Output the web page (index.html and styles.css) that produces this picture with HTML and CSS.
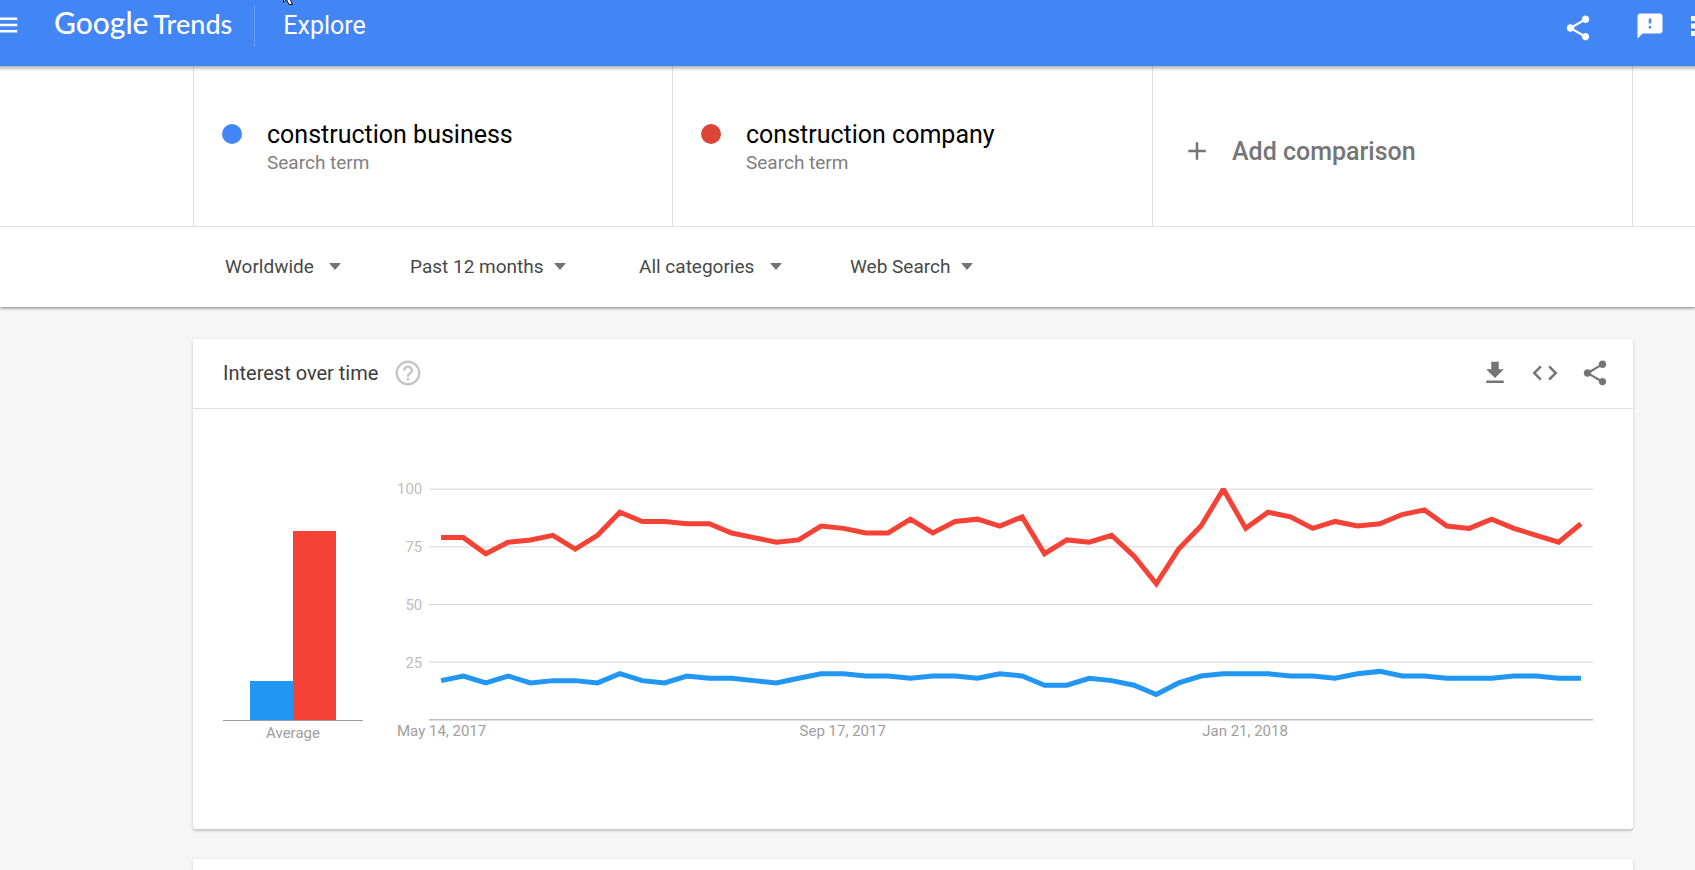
FILE: index.html
```html
<!DOCTYPE html>
<html lang="en">
<head>
  <meta charset="UTF-8">
  <title>Google Trends - Explore</title>
  <link rel="stylesheet" href="styles.css">
</head>
<body>
  <header class="topbar">
    <button class="icon-btn menu-btn" aria-label="Menu">
      <svg viewBox="0 0 24 24"><path d="M3 18h18v-2H3v2zm0-5h18v-2H3v2zm0-7v2h18V6H3z"/></svg>
    </button>
    <a class="logo" href="#"><span class="logo-google">Google</span><span class="logo-trends">Trends</span></a>
    <h1 class="page-name">Explore</h1>
    <div class="topbar-actions">
      <button class="icon-btn share-btn" aria-label="Share">
        <svg viewBox="0 0 24 24"><path d="M18 16.08c-.76 0-1.44.3-1.96.77L8.91 12.7c.05-.23.09-.46.09-.7s-.04-.47-.09-.7l7.05-4.11c.54.5 1.25.81 2.04.81 1.66 0 3-1.34 3-3s-1.34-3-3-3-3 1.34-3 3c0 .24.04.47.09.7L8.04 9.81C7.5 9.31 6.79 9 6 9c-1.66 0-3 1.34-3 3s1.34 3 3 3c.79 0 1.5-.31 2.04-.81l7.12 4.16c-.05.21-.08.43-.08.65 0 1.61 1.31 2.92 2.92 2.92s2.92-1.31 2.92-2.92-1.31-2.92-2.92-2.92z"/></svg>
      </button>
      <button class="icon-btn" aria-label="Send feedback">
        <svg viewBox="0 0 24 24"><path d="M20 2H4c-1.1 0-1.99.9-1.99 2L2 22l4-4h14c1.1 0 2-.9 2-2V4c0-1.1-.9-2-2-2zm-7 12h-2v-2h2v2zm0-4h-2V6h2v4z"/></svg>
      </button>
      <button class="icon-btn" aria-label="Google apps">
        <svg viewBox="0 0 24 24"><path d="M4 8h4V4H4v4zm6 12h4v-4h-4v4zm-6 0h4v-4H4v4zm0-6h4v-4H4v4zm6 0h4v-4h-4v4zm6-10v4h4V4h-4zm-6 4h4V4h-4v4zm6 6h4v-4h-4v4zm0 6h4v-4h-4v4z"/></svg>
      </button>
    </div>
    <svg class="pointer" viewBox="0 0 12 6"><path d="M.5-8V2.500L3.500-.5L6 4.500H9.500L6.500-2H11z" fill="#fff" stroke="#111"/></svg>
  </header>

  <section class="search">
    <div class="terms">
      <div class="term">
        <span class="dot dot-blue"></span>
        <div>
          <div class="term-name">construction business</div>
          <div class="term-type">Search term</div>
        </div>
      </div>
      <div class="term">
        <span class="dot dot-red"></span>
        <div>
          <div class="term-name">construction company</div>
          <div class="term-type">Search term</div>
        </div>
      </div>
      <button class="add-term">
        <svg viewBox="0 0 24 24"><path d="M19 13h-6v6h-2v-6H5v-2h6V5h2v6h6v2z"/></svg>
        Add comparison
      </button>
    </div>

    <div class="filters">
      <div class="filter filter-wide">
        <select aria-label="Region"><option>Worldwide</option></select>
        <svg viewBox="0 0 12 7"><path d="M0 0h12L6 7z"/></svg>
      </div>
      <div class="filter">
        <select aria-label="Time range"><option>Past 12 months</option></select>
        <svg viewBox="0 0 12 7"><path d="M0 0h12L6 7z"/></svg>
      </div>
      <div class="filter filter-wide">
        <select aria-label="Category"><option>All categories</option></select>
        <svg viewBox="0 0 12 7"><path d="M0 0h12L6 7z"/></svg>
      </div>
      <div class="filter">
        <select aria-label="Search type"><option>Web Search</option></select>
        <svg viewBox="0 0 12 7"><path d="M0 0h12L6 7z"/></svg>
      </div>
    </div>
  </section>

  <main class="content">
    <section class="card">
      <div class="card-header">
        <h2>Interest over time</h2>
        <button class="icon-btn help-btn" aria-label="Help">
          <svg viewBox="0 0 24 24"><path d="M11 18h2v-2h-2v2zm1-16C6.480 2 2 6.480 2 12s4.480 10 10 10 10-4.480 10-10S17.520 2 12 2zm0 18c-4.410 0-8-3.590-8-8s3.590-8 8-8 8 3.590 8 8-3.590 8-8 8zm0-14c-2.210 0-4 1.790-4 4h2c0-1.100.9-2 2-2s2 .9 2 2c0 2-3 1.750-3 5h2c0-2.250 3-2.500 3-5 0-2.210-1.790-4-4-4z"/></svg>
        </button>
        <div class="card-actions">
          <button class="icon-btn" aria-label="Download CSV">
            <svg viewBox="0 0 24 24"><path d="M19 9h-4V3H9v6H5l7 7 7-7zM5 18v2h14v-2H5z"/></svg>
          </button>
          <button class="icon-btn" aria-label="Embed">
            <svg viewBox="0 0 24 24"><path d="M9.400 16.600L4.800 12l4.600-4.600L8 6l-6 6 6 6 1.400-1.400zm5.200 0l4.600-4.600-4.600-4.600L16 6l6 6-6 6-1.400-1.400z"/></svg>
          </button>
          <button class="icon-btn" aria-label="Share chart">
            <svg viewBox="0 0 24 24"><path d="M18 16.080c-.76 0-1.440.3-1.960.77L8.910 12.700c.05-.23.09-.46.09-.7s-.04-.47-.09-.7l7.050-4.110c.54.5 1.250.81 2.040.81 1.660 0 3-1.340 3-3s-1.340-3-3-3-3 1.340-3 3c0 .24.04.47.09.7L8.040 9.810C7.500 9.310 6.790 9 6 9c-1.660 0-3 1.340-3 3s1.340 3 3 3c.79 0 1.500-.31 2.040-.81l7.120 4.160c-.05.21-.08.43-.08.65 0 1.610 1.310 2.920 2.920 2.920s2.920-1.310 2.920-2.920-1.310-2.920-2.920-2.920z"/></svg>
          </button>
        </div>
      </div>

      <div class="card-body">
        <div class="average">
          <div class="bars">
            <div class="bar bar-blue" style="height: 17%"></div>
            <div class="bar bar-red" style="height: 82%"></div>
          </div>
          <div class="average-label">Average</div>
        </div>

        <div class="timeline">
          <div class="y-axis">
            <span>100</span>
            <span>75</span>
            <span>50</span>
            <span>25</span>
          </div>
          <!-- one x unit per week, y is 100 minus the value -->
          <svg class="plot" viewBox="-0.54 -0.5 52.08 101" preserveAspectRatio="none">
            <path class="grid-line" d="M-1 0H52M-1 25H52M-1 50H52M-1 75H52"/>
            <path class="base-line" d="M-1 100H52"/>
            <polyline class="line-blue" points="0,83 1,81 2,84 3,81 4,84 5,83 6,83 7,84 8,80 9,83 10,84 11,81 12,82 13,82 14,83 15,84 16,82 17,80 18,80 19,81 20,81 21,82 22,81 23,81 24,82 25,80 26,81 27,85 28,85 29,82 30,83 31,85 32,89 33,84 34,81 35,80 36,80 37,80 38,81 39,81 40,82 41,80 42,79 43,81 44,81 45,82 46,82 47,82 48,81 49,81 50,82 51,82"/>
            <polyline class="line-red" points="0,21 1,21 2,28 3,23 4,22 5,20 6,26 7,20 8,10 9,14 10,14 11,15 12,15 13,19 14,21 15,23 16,22 17,16 18,17 19,19 20,19 21,13 22,19 23,14 24,13 25,16 26,12 27,28 28,22 29,23 30,20 31,29 32,41 33,26 34,16 35,0 36,17 37,10 38,12 39,17 40,14 41,16 42,15 43,11 44,9 45,16 46,17 47,13 48,17 49,20 50,23 51,15"/>
          </svg>
          <div class="x-axis">
            <span>May 14, 2017</span>
            <span>Sep 17, 2017</span>
            <span>Jan 21, 2018</span>
          </div>
        </div>
      </div>
    </section>

    <section class="card card-next"></section>
  </main>
</body>
</html>
```

FILE: styles.css
```css
* {
  box-sizing: border-box;
}

body {
  display: flex;
  flex-direction: column;
  margin: 0;
  min-height: 100vh;
  overflow-x: hidden;
  background: #f6f6f6;
  font-family: Roboto, "Liberation Sans", sans-serif;
  color: #000;
}

h1,
h2 {
  margin: 0;
  font-weight: 400;
}

button,
select {
  margin: 0;
  padding: 0;
  border: 0;
  background: none;
  font-family: inherit;
  cursor: pointer;
}

svg {
  display: block;
  fill: currentColor;
}

.icon-btn {
  color: inherit;
}

.icon-btn svg,
.add-term svg {
  width: 30px;
  height: 30px;
}

/* top bar */
.topbar {
  position: relative;
  z-index: 2;
  height: 66px;
  display: flex;
  align-items: flex-start;
  background: #4285f4;
  color: #fff;
  overflow: hidden;
}

.menu-btn {
  margin: 10px 0 0 -9px;
}

.logo {
  display: flex;
  align-items: baseline;
  gap: 5px;
  margin: 4px 0 0 33px;
  color: #fff;
  text-decoration: none;
  font-family: Lato, sans-serif;
  font-weight: 500;
  line-height: 36px;
}

.logo-google {
  font-size: 30px;
}

.logo-trends {
  font-size: 27px;
}

.page-name {
  margin: 6px 0 0 22px;
  padding-left: 28px;
  border-left: 1px solid rgba(255, 255, 255, 0.2);
  font-size: 25px;
  line-height: 40px;
  height: 41px;
}

.topbar-actions {
  display: flex;
  align-items: flex-start;
  margin: 11px -21px 0 auto;
  gap: 21px;
}

.share-btn {
  margin: 2px 21px 0 0;
}

.pointer {
  position: absolute;
  top: 0;
  left: 283px;
  width: 12px;
  height: 6px;
}

/* search terms */
.search {
  position: relative;
  background: #fff;
  box-shadow: 0 1px 3px rgba(0, 0, 0, 0.5);
}

.search::before {
  content: "";
  position: absolute;
  top: 0;
  left: 0;
  right: 0;
  height: 5px;
  background: linear-gradient(rgba(0, 0, 0, 0.3), rgba(0, 0, 0, 0));
}

.terms {
  display: grid;
  grid-template-columns: 479fr 480fr 481fr;
  height: 161px;
  padding: 0 62px 0 193px;
  border-bottom: 1px solid #e0e0e0;
}

.term {
  display: flex;
  align-items: flex-start;
  gap: 25px;
  padding: 54px 0 0 28px;
  border-left: 1px solid #e0e0e0;
}

.dot {
  width: 20px;
  height: 20px;
  margin-top: 4px;
  border-radius: 50%;
}

.dot-blue {
  background: #4285f4;
}

.dot-red {
  background: #db4437;
}

.term-name {
  font-size: 25px;
  line-height: 30px;
}

.term-type {
  font-size: 19px;
  line-height: 26px;
  color: #808080;
}

.add-term {
  display: flex;
  align-items: center;
  gap: 20px;
  padding: 10px 0 0 29px;
  border-left: 1px solid #e0e0e0;
  border-right: 1px solid #e0e0e0;
  color: #757575;
  font-size: 25px;
  font-weight: 500;
}

/* filters */
.filters {
  display: grid;
  grid-template-columns: 185px 229px 211px auto;
  align-items: center;
  height: 80px;
  padding: 0 62px 0 225px;
}

.filter {
  position: relative;
  justify-self: start;
}

.filter select {
  appearance: none;
  padding-right: 22px;
  font-size: 19px;
  line-height: 24px;
  color: #484848;
}

.filter-wide select {
  padding-right: 27px;
}

.filter svg {
  position: absolute;
  top: 8px;
  right: 0;
  width: 12px;
  height: 7px;
  color: #757575;
  pointer-events: none;
}

/* cards */
.content {
  flex: 1;
  display: flex;
  flex-direction: column;
  gap: 30px;
  padding: 32px 62px 0 193px;
}

.card {
  background: #fff;
  border-radius: 3px;
  box-shadow: 0 2px 2px rgba(0, 0, 0, 0.14), 0 1px 4px rgba(0, 0, 0, 0.1);
}

.card-next {
  flex: 1;
  border-radius: 3px 3px 0 0;
}

.card-header {
  display: flex;
  align-items: center;
  height: 70px;
  padding: 0 23px 2px 30px;
  border-bottom: 1px solid #e0e0e0;
}

.card-header h2 {
  font-size: 20px;
  line-height: 26px;
  color: #3c3c3c;
}

.help-btn {
  margin-left: 15px;
  color: #c6c6c6;
}

.card-actions {
  display: flex;
  gap: 20px;
  margin-left: auto;
  color: #757575;
}

.card-body {
  display: flex;
  gap: 34px;
  padding: 79px 40px 86px 30px;
  font-size: 15px;
  line-height: 20px;
  color: #9e9e9e;
}

/* average bars */
.average {
  width: 140px;
  text-align: center;
}

.bars {
  display: flex;
  align-items: flex-end;
  justify-content: center;
  height: 233px;
  padding-top: 1px;
  border-bottom: 1px solid #9e9e9e;
}

.bar {
  width: 43px;
}

.bar-blue {
  background: #2196f3;
}

.bar-red {
  background: #f44336;
}

.average-label {
  padding-top: 2px;
}

/* timeline chart */
.timeline {
  flex: 1;
  display: grid;
  grid-template-columns: 25px 1fr;
  grid-template-rows: 233px auto;
  column-gap: 7px;
}

.y-axis {
  display: grid;
  grid-template-rows: repeat(4, 58px);
  margin-top: -9px;
  text-align: right;
  color: #bdbdbd;
}

.plot {
  width: 100%;
  height: 233px;
  fill: none;
}

.plot path,
.plot polyline {
  vector-effect: non-scaling-stroke;
}

.grid-line {
  stroke: #d6d6d6;
}

.base-line {
  stroke: #9e9e9e;
}

.line-blue,
.line-red {
  stroke-width: 5px;
}

.line-blue {
  stroke: #2196f3;
}

.line-red {
  stroke: #f44336;
}

.x-axis {
  grid-column: 1 / -1;
  display: grid;
  grid-template-columns: 34fr 34fr 33fr;
}
```
